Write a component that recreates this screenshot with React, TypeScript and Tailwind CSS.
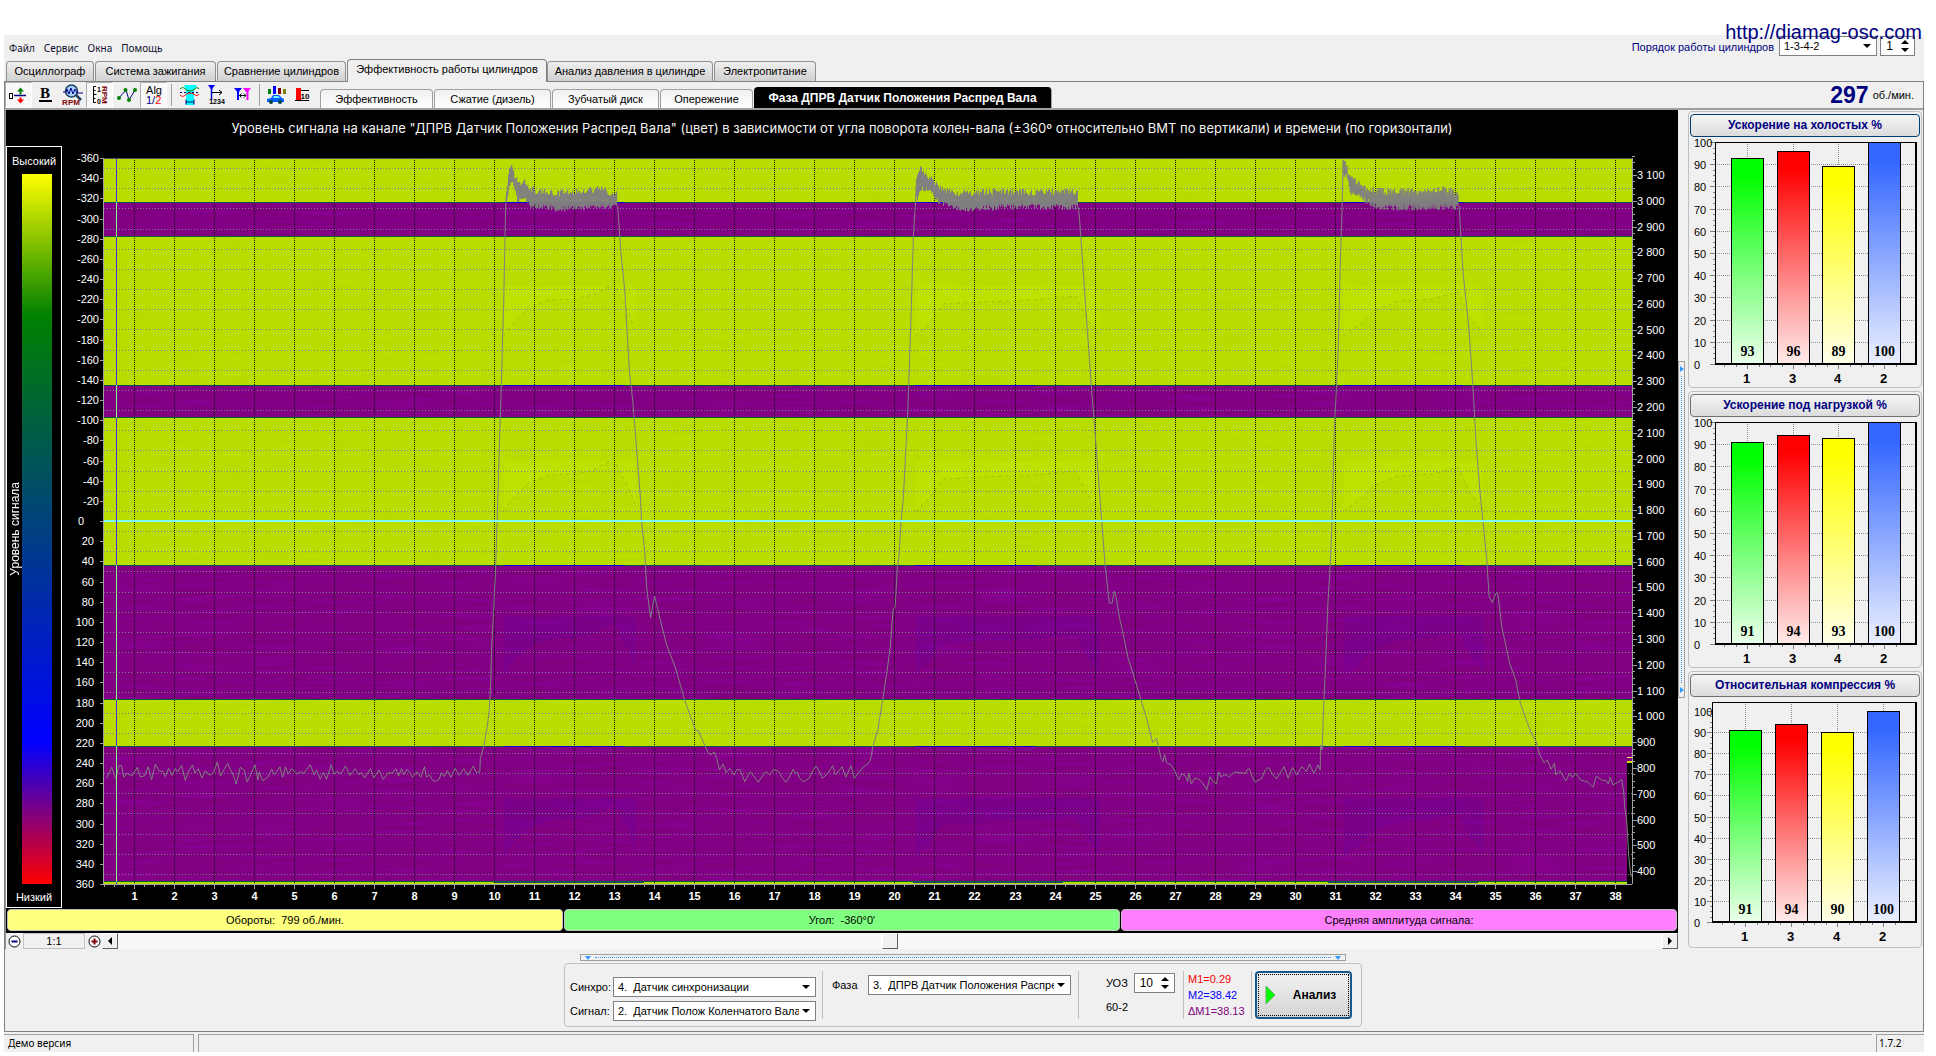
import { useLayoutEffect, useRef, useState } from "react";
import type { ReactNode } from "react";

/* ---------- shared data ---------- */

const MAIN_TABS = [
  { label: "Осциллограф", width: "w-[88px]" },
  { label: "Система зажигания", width: "w-[121px]" },
  { label: "Сравнение цилиндров", width: "w-[129px]" },
  { label: "Эффективность работы цилиндров", width: "w-[200px]" },
  { label: "Анализ давления в цилиндре", width: "w-[166px]" },
  { label: "Электропитание", width: "w-[102px]" },
];

const SUB_TABS = [
  { label: "Эффективность", width: "w-[113px]" },
  { label: "Сжатие (дизель)", width: "w-[117px]" },
  { label: "Зубчатый диск", width: "w-[107px]" },
  { label: "Опережение", width: "w-[93px]" },
];

type Bar = { name: string; value: number };

const CHARTS: { title: string; bars: Bar[]; headroom: number; focused?: boolean }[] = [
  { title: "Ускорение на холостых %", headroom: 0, focused: true, bars: [{ name: "1", value: 93 }, { name: "3", value: 96 }, { name: "4", value: 89 }, { name: "2", value: 100 }] },
  { title: "Ускорение под нагрузкой %", headroom: 0, bars: [{ name: "1", value: 91 }, { name: "3", value: 94 }, { name: "4", value: 93 }, { name: "2", value: 100 }] },
  { title: "Относительная компрессия %", headroom: 9, bars: [{ name: "1", value: 91 }, { name: "3", value: 94 }, { name: "4", value: 90 }, { name: "2", value: 100 }] },
];

const BAR_COLORS = [
  { top: "#00ff00", bottom: "#ebffeb" },
  { top: "#ff0000", bottom: "#ffebeb" },
  { top: "#ffff00", bottom: "#ffffeb" },
  { top: "#3366ff", bottom: "#ebf0ff" },
];

/* ---------- engine speed trace, in nominal plot units ---------- */

const PLOT_W = 1529;
const PLOT_H = 726;

type Pt = [number, number];

const place = (pts: Pt[], ox: number, oy: number, sx: number, sy: number): Pt[] =>
  pts.map(([x, y]) => [ox + x / sx, oy + y / sy]);

const IDLE_START = place(
  [[32,265],[47,232],[60,268],[68,228],[76,226],[84,262],[92,250],[108,258],[124,232],[132,260],[145,258],[157,230],[167,270],[178,222],[190,244],[200,243],[208,260],[218,235],[228,256],[238,235],[245,246],[257,226],[268,272],[278,243],[290,225],[297,250],[307,236],[318,264],[328,242],[340,256],[352,250],[364,216],[374,258],[395,220],[412,256],[421,282],[433,232],[445,240],[454,276],[466,250],[477,224],[486,270],[490,245],[500,272],[516,262],[527,237],[536,254],[552,230],[560,262],[569,230],[577,252],[588,236],[604,252],[613,245],[624,250],[643,224],[655,255],[662,240],[673,268],[683,247],[692,268],[706,224],[715,253],[723,244],[735,252],[749,228],[762,256],[778,236],[790,254],[797,248],[806,264],[824,236],[834,264],[850,240],[862,268],[880,247],[889,250],[900,236],[908,258],[917,236],[925,254],[933,238],[941,246],[950,262],[963,245],[975,262],[986,230],[992,262],[1001,254],[1010,270],[1019,275],[1030,268],[1037,248],[1045,260],[1055,242],[1065,262],[1078,235],[1090,256],[1104,236],[1116,256],[1133,228],[1142,248],[1152,245],[1154,205],[1165,165],[1175,105],[1180,65],[1184,0]],
  -8, 532, 3, 3);

const RISE_1: Pt[] = [[387,525],[388,489],[390,452],[392,409],[394,342],[398,215],[399,175],[400,147],[401,95],[402,45]];

const FALL_1: Pt[] = [[514,48],[517,92],[521,132],[523,167],[526,217],[529,242],[537,342],[538,364],[541,392],[543,429],[547,460],[551,438],[556,459],[563,487],[572,510],[581,542],[592,572],[595,573],[604,594]];

const IDLE_2 = place(
  [[563,765],[570,755],[576,775],[582,810],[590,792],[597,818],[605,805],[615,825],[620,810],[628,808],[639,845],[651,815],[660,830],[669,847],[685,815],[690,820],[695,825],[703,808],[715,815],[722,832],[731,847],[740,828],[747,808],[752,820],[757,817],[762,835],[770,845],[783,835],[790,815],[798,798],[804,810],[813,835],[825,820],[836,797],[842,825],[850,812],[857,800],[865,832],[877,797],[884,835],[893,820],[905,800],[912,795],[920,782],[927,735],[937,690],[948,600],[957,520],[965,440],[971,330],[976,320],[981,200],[984,175],[989,65],[994,0]],
  356, 342, 2.24, 3);

const RISE_2: Pt[] = [[804,260],[806,205],[808,142],[810,75],[812,45]];

const FALL_2: Pt[] = [[975,50],[976,59],[980,115],[983,159],[988,229],[992,279],[996,332],[1002,409],[1006,445],[1009,445],[1011,433],[1013,440]];

const IDLE_3 = place(
  [[0,170],[10,215],[25,290],[50,370],[68,430],[80,470],[100,547],[112,535],[125,595],[131,605],[136,583],[142,608],[155,615],[168,635],[178,660],[188,640],[200,650],[205,665],[209,640],[216,672],[226,655],[240,658],[252,672],[263,690],[272,650],[282,665],[292,672],[298,635],[305,650],[318,644],[330,650],[345,636],[365,638],[380,640],[384,628],[390,626],[398,648],[408,666],[428,655],[438,630],[448,622],[458,640],[472,656],[482,640],[495,620],[507,655],[520,622],[532,645],[548,620],[562,635],[571,612],[584,640],[596,615],[603,630],[604,555],[609,570],[613,450],[617,360],[622,240],[626,130],[634,0]],
  1016, 402, 3, 3);

const RISE_3: Pt[] = [[1229,359],[1231,275],[1235,192],[1237,109],[1239,45]];

const FALL_3: Pt[] = [[1356,48],[1357,65],[1360,115],[1366,172],[1370,232],[1373,285],[1377,335],[1383,395]];

const IDLE_4 = place(
  [[1103,0],[1110,110],[1120,128],[1130,100],[1136,100],[1148,200],[1172,310],[1190,360],[1204,430],[1220,475],[1237,520],[1251,545],[1262,585],[1275,608],[1285,600],[1296,628],[1306,610],[1310,645],[1323,632],[1340,663],[1352,640],[1360,652],[1370,640],[1385,660],[1405,665],[1422,682],[1432,648],[1448,660],[1462,662],[1468,672],[1474,652],[1482,675],[1500,665],[1508,658],[1514,695],[1517,740],[1523,780],[1530,900],[1536,950]],
  1016, 402, 3, 3);

const jitter = (n: number) => {
  const v = Math.sin(n * 127.1) * 43758.5453;
  return v - Math.floor(v);
};

const interpolate = (pts: Pt[], x: number) => {
  for (let i = 1; i < pts.length; i++) {
    if (x <= pts[i][0]) {
      const [x0, y0] = pts[i - 1];
      const [x1, y1] = pts[i];
      return y0 + ((x - x0) / (x1 - x0)) * (y1 - y0);
    }
  }
  return pts[pts.length - 1][1];
};

/* A dense stretch of the trace swinging between an upper and a lower envelope. */
const plateau = (upper: Pt[], lower: Pt[]): Pt[] => {
  const out: Pt[] = [];
  for (let x = upper[0][0]; x <= upper[upper.length - 1][0]; x += 1) {
    out.push([x, interpolate(upper, x) + (jitter(x) - 0.5) * 7]);
    out.push([x, interpolate(lower, x) + (jitter(x + 900) - 0.5) * 6]);
  }
  return out;
};

const TOP_1 = plateau(
  [[403,32],[406,10],[409,9],[412,20],[416,26],[421,23],[426,30],[436,34],[456,35],[486,33],[496,30],[506,35],[513,36]],
  [[403,44],[406,25],[410,27],[414,42],[421,40],[426,48],[436,48],[456,51],[486,49],[513,47]]);
const TOP_2 = plateau(
  [[813,22],[817,10],[824,18],[831,24],[841,33],[856,35],[896,34],[936,35],[966,33],[974,35]],
  [[813,42],[818,30],[826,32],[834,42],[846,48],[861,51],[896,49],[974,49]]);
const TOP_3 = plateau(
  [[1240,4],[1242,4],[1246,17],[1253,24],[1266,32],[1286,34],[1326,34],[1336,31],[1355,35]],
  [[1240,17],[1243,17],[1248,36],[1256,38],[1271,48],[1296,50],[1355,49]]);

const TRACE: Pt[] = [
  ...IDLE_START, ...RISE_1, ...TOP_1, ...FALL_1, ...IDLE_2, ...RISE_2, ...TOP_2,
  ...FALL_2, ...IDLE_3, ...RISE_3, ...TOP_3, ...FALL_3, ...IDLE_4,
];

const LOW_BANDS: Pt[] = [[44, 79], [227, 260], [407, 542], [588, 724]];

const RIDGES: Pt[][] = [
  [[400,0],[412,-16],[425,-28],[445,-36],[470,-37],[490,-41],[510,-52],[524,-25],[532,-5]],
  [[812,0],[825,-12],[840,-32],[880,-34],[930,-36],[972,-40],[985,-15],[996,-2]],
  [[1240,0],[1255,-10],[1270,-25],[1295,-35],[1330,-37],[1355,-44],[1366,-20],[1380,-3]],
];

const linePath = (pts: Pt[], sx: number, sy: number) =>
  pts.map(([x, y], i) => `${i ? "L" : "M"}${(x * sx).toFixed(1)} ${(y * sy).toFixed(1)}`).join("");

function useWidth(initial: number) {
  const ref = useRef<HTMLDivElement>(null);
  const [width, setWidth] = useState(initial);
  useLayoutEffect(() => {
    const node = ref.current;
    if (!node) return;
    const update = () => setWidth(node.clientWidth);
    update();
    const observer = new ResizeObserver(update);
    observer.observe(node);
    return () => observer.disconnect();
  }, []);
  return { ref, width };
}

function HeatMap() {
  const { ref, width } = useWidth(1616);
  const height = 762;
  const left = 42;
  const top = 12;
  const w = Math.max(200, width - left - 46);
  const h = PLOT_H;
  const sx = w / PLOT_W;
  const turnX = (t: number) => Math.round((30 + (t - 1) * 40.05) * sx) + 0.5;
  const angleY = (a: number) => Math.round(((a + 360) / 720) * h) + 0.5;
  const rpmY = (r: number) => Math.round(17 + ((3100 - r) / 100) * 25.78) + 0.5;
  const angles = Array.from({ length: 37 }, (_, i) => -360 + i * 20);
  const turns = Array.from({ length: 38 }, (_, i) => i + 1);
  const rpms = Array.from({ length: 28 }, (_, i) => 400 + i * 100);
  const thousands = (n: number) => (n >= 1000 ? `${Math.floor(n / 1000)} ${String(n % 1000).padStart(3, "0")}` : String(n));

  return (
    <div ref={ref} className="min-w-0 flex-1">
      <svg className="block" width={width} height={height} role="img" aria-label="Уровень сигнала по углу и времени">
        <defs>
          <filter id="grain" x="0" y="0" width="100%" height="100%">
            <feTurbulence type="fractalNoise" baseFrequency="0.02 0.35" numOctaves="3" seed="4" />
            <feColorMatrix type="matrix" values="0 0 0 0 0.56  0 0 0 0 0.76  0 0 0 0 0  2.4 0 0 0 -0.9" />
          </filter>
          <filter id="grainDark" x="0" y="0" width="100%" height="100%">
            <feTurbulence type="fractalNoise" baseFrequency="0.015 0.3" numOctaves="3" seed="9" />
            <feColorMatrix type="matrix" values="0 0 0 0 0.35  0 0 0 0 0  0 0 0 0 0.58  2 0 0 0 -0.8" />
          </filter>
          <clipPath id="lowBands">
            {LOW_BANDS.map(([a, b]) => <rect key={a} x="0" y={a} width={w} height={b - a} />)}
          </clipPath>
        </defs>
        <g transform={`translate(${left} ${top})`}>
          <rect width={w} height={h} fill="#b7dd00" />
          <rect width={w} height={h} filter="url(#grain)" opacity="0.35" />
          {LOW_BANDS.map(([a, b]) => (
            <rect key={a} x="0" y={a} width={w} height={b - a} fill="#800080" shapeRendering="crispEdges" />
          ))}
          <g clipPath="url(#lowBands)">
            <rect width={w} height={h} filter="url(#grainDark)" opacity="0.3" />
          </g>
          {RIDGES.map((ridge, i) => (
            <g key={i} fill="none">
              {[518, 700].map((base) => (
                <g key={base} transform={`translate(0 ${base})`}>
                  <path d={`${linePath(ridge, sx, 1)}V-60H${ridge[0][0] * sx}Z`} fill="#5000b0" opacity="0.14" />
                  <path d={linePath(ridge, sx, 1)} stroke="#a8005c" strokeDasharray="3 4" opacity="0.6" />
                </g>
              ))}
              {[178, 353].map((base) => (
                <g key={base} transform={`translate(0 ${base})`}>
                  <path d={`${linePath(ridge, sx, 1)}V-50H${ridge[0][0] * sx}Z`} fill="#d0f000" opacity="0.25" />
                  <path d={linePath(ridge, sx, 1)} stroke="#8cc000" strokeDasharray="3 4" opacity="0.8" />
                </g>
              ))}
            </g>
          ))}
          {LOW_BANDS.map(([a, b]) => (
            <g key={a} shapeRendering="crispEdges">
              <rect x="0" y={a} width={w} height="1" fill="#004c50" />
              <rect x="0" y={b - 1} width={w} height="1" fill="#006030" />
              {[400, 812, 1240].map((x) => (
                <rect key={x} x={x * sx} y={a} width={120 * sx} height="1" fill="#0000d8" />
              ))}
            </g>
          ))}
          <g shapeRendering="crispEdges">
            {[390, 810, 1225].map((x) => (
              <rect key={x} x={x * sx} y="724" width={150 * sx} height="1" fill="#204880" />
            ))}
            <rect x={w - 5} y="604" width="5" height="122" fill="#000" />
            <rect x={w - 5} y="599" width="5" height="1" fill="#ffff40" />
            <rect x={w - 5} y="603" width="5" height="2" fill="#c8e000" />
          </g>
          <g stroke="#80808f" strokeDasharray="1 2" shapeRendering="crispEdges">
            {angles.slice(0, 36).map((a) => (
              <line key={a} x1="0" x2={w} y1={angleY(a + 10)} y2={angleY(a + 10)} />
            ))}
          </g>
          <g stroke="#101010" strokeDasharray="1 1" shapeRendering="crispEdges">
            {turns.map((t) => <line key={t} x1={turnX(t)} x2={turnX(t)} y1="0" y2={h} />)}
          </g>
          <path d={linePath(TRACE, sx, 1)} fill="none" stroke="#808080" strokeWidth="1" />
          <g shapeRendering="crispEdges">
            <rect x="0" y="362" width={w} height="2" fill="#80ffff" />
            <rect x="12" y="0" width="1" height={h} fill="#4828e8" />
            {LOW_BANDS.map(([a, b]) => <rect key={a} x="12" y={a} width="1" height={b - a} fill="#80ff80" />)}
          </g>
          <g stroke="#a0a0a4" shapeRendering="crispEdges">
            <line x1="-0.5" x2="-0.5" y1="0" y2={h} />
            <line x1="0" x2={w} y1={h + 0.5} y2={h + 0.5} />
            <line x1={w + 0.5} x2={w + 0.5} y1="0" y2={h} />
            <line x1="0" x2={w} y1="0.5" y2="0.5" stroke="#505050" />
            {angles.map((a) => <line key={a} x1="-4" x2="0" y1={angleY(a)} y2={angleY(a)} />)}
            {rpms.map((r) => (
              <g key={r}>
                <line x1={w} x2={w + 5} y1={rpmY(r)} y2={rpmY(r)} />
                {[25, 50, 75].map((d) => <line key={d} x1={w} x2={w + 3} y1={rpmY(r + d)} y2={rpmY(r + d)} />)}
              </g>
            ))}
            {turns.map((t) => (
              <g key={t}>
                <line x1={turnX(t)} x2={turnX(t)} y1={h} y2={h + 5} />
                {[0.25, 0.5, 0.75].map((d) => <line key={d} x1={turnX(t - d)} x2={turnX(t - d)} y1={h} y2={h + 3} />)}
              </g>
            ))}
          </g>
          <g fill="#fff" fontSize="11">
            {angles.map((a) => (
              <text key={a} x={a > 0 ? -10 : a === 0 ? -20 : -5} y={angleY(a) + 3} textAnchor="end">{a}</text>
            ))}
            {rpms.map((r) => <text key={r} x={w + 5} y={rpmY(r) + 3}>{thousands(r)}</text>)}
          </g>
          <g fill="#fff" fontSize="11" fontWeight="700" textAnchor="middle">
            {turns.map((t) => <text key={t} x={turnX(t)} y={h + 16}>{t}</text>)}
          </g>
        </g>
      </svg>
    </div>
  );
}

function BarChart({ bars, headroom, id }: { bars: Bar[]; headroom: number; id: string }) {
  const { ref, width } = useWidth(230);
  const left = headroom ? 22 : 25;
  const top = 5;
  const w = width - left - 4;
  const h = headroom ? 220 : 222;
  const unit = (h - headroom) / 100;
  const y = (v: number) => Math.round(h - v * unit) + 0.5;
  const centers = bars.map((_, i) => Math.round((w * (i * 0.2265 + 0.16))) + 0.5);
  const marks = Array.from({ length: 11 }, (_, i) => i * 10);
  return (
    <div ref={ref} className="w-full">
      <svg className="block" width={width} height={249} role="img" aria-label="Диаграмма по цилиндрам">
        <defs>
          {BAR_COLORS.map((c, i) => (
            <linearGradient key={c.top} id={`${id}-${i}`} x1="0" y1="0" x2="0" y2="1">
              <stop offset="0.08" stopColor={c.top} />
              <stop offset="1" stopColor={c.bottom} />
            </linearGradient>
          ))}
        </defs>
        <g transform={`translate(${left} ${top})`}>
          <g stroke="#909090" strokeDasharray="1 1" shapeRendering="crispEdges">
            {marks.slice(1, 10).map((m) => <line key={m} x1="0" x2={w} y1={y(m)} y2={y(m)} />)}
            {centers.map((c) => <line key={c} x1={c} x2={c} y1="0" y2={h} />)}
          </g>
          <g stroke="#808080" shapeRendering="crispEdges">
            {marks.map((m) => (
              <g key={m}>
                <line x1="-5" x2="0" y1={y(m)} y2={y(m)} />
                {m < 100 && [2.5, 5, 7.5].map((d) => <line key={d} x1="-2" x2="0" y1={y(m + d)} y2={y(m + d)} />)}
              </g>
            ))}
            {centers.map((c) => (
              <g key={c}>
                <line x1={c} x2={c} y1={h} y2={h + 5} />
                {[-23, -11, 12].map((d) => <line key={d} x1={c + d} x2={c + d} y1={h} y2={h + 3} />)}
              </g>
            ))}
          </g>
          {bars.map((b, i) => (
            <rect
              key={b.name}
              x={centers[i] - 16}
              y={y(b.value)}
              width="32"
              height={h - y(b.value)}
              fill={`url(#${id}-${i})`}
              stroke="#000"
              shapeRendering="crispEdges"
            />
          ))}
          <g stroke="#000" shapeRendering="crispEdges" fill="none">
            <path d={`M0 0.5H${w}`} />
            <path d={`M0.5 0V${h}`} strokeWidth="1" />
            <path d={`M0 ${h}H${w}V0`} strokeWidth="2" />
          </g>
          <g fontSize="11" fill="#000">
            {marks.map((m) => (
              <text key={m} x={-left + 4} y={y(m) + 4}>{m}</text>
            ))}
          </g>
          <g textAnchor="middle" fontWeight="700">
            {bars.map((b, i) => (
              <g key={b.name}>
                <text x={centers[i]} y={h - 8} fontSize="14" fontFamily="'Liberation Serif', serif">{b.value}</text>
                <text x={centers[i] - 1} y={h + 19} fontSize="13">{b.name}</text>
              </g>
            ))}
          </g>
        </g>
      </svg>
    </div>
  );
}

/* ---------- toolbar ---------- */

function ToolButton({ label, pressed, children }: { label: string; pressed?: boolean; children: ReactNode }) {
  return (
    <button
      type="button"
      aria-label={label}
      className={
        pressed
          ? "flex h-[26px] w-[27px] items-center justify-center border border-t-[#b0b0b0] border-l-[#b0b0b0] border-r-white border-b-white bg-[#f8f8f8]"
          : "flex h-[26px] w-[27px] items-center justify-center"
      }
    >
      <svg width="22" height="22" viewBox="0 0 22 22" fill="none" stroke="#000080">{children}</svg>
    </button>
  );
}

function Toolbar() {
  return (
    <div className="flex h-[26px] items-start">
      <ToolButton label="Ноль" pressed>
        <rect x="1.500" y="9.500" width="3" height="5" stroke="#000" />
        <path d="M6 11.500h12" strokeWidth="1.500" />
        <path d="M12.500 3.500l3.500 4h-2.500v3h-2v-3h-2.500z" fill="#008000" stroke="none" />
        <path d="M12.500 19.500l3.500-4h-2.500v-2h-2v2h-2.500z" fill="#f00" stroke="none" />
      </ToolButton>
      <ToolButton label="Жирный">
        <text x="10" y="14" fontSize="15" fontWeight="700" textAnchor="middle" fill="#000" stroke="none" fontFamily="'Liberation Serif', serif">B</text>
        <path d="M4 17h13" stroke="#000" strokeWidth="2" />
      </ToolButton>
      <ToolButton label="Поиск оборотов">
        <circle cx="9.500" cy="7" r="6" fill="#a8d0ff" stroke="#204060" strokeWidth="1.500" />
        <path d="M1 8h3l1-3 2 5 2-6 2 6 2-5 2 4h6" strokeWidth="1" />
        <path d="M14 11l5 5" stroke="#204060" strokeWidth="2.500" />
        <text x="9" y="21" fontSize="8" fontWeight="700" textAnchor="middle" fill="#800000" stroke="none">RPM</text>
      </ToolButton>
      <ToolButton label="Шкала оборотов" pressed>
        <path d="M7 2.500H4.500V18.500H7M4.500 6.500h2M4.500 10.500h3M4.500 14.500h2" stroke="#000" />
        <text x="8" y="8" fontSize="7" fontWeight="700" fill="#000" stroke="none">1</text>
        <text x="8" y="20" fontSize="7" fontWeight="700" fill="#000" stroke="none">0</text>
        <text transform="translate(13 2) rotate(90)" fontSize="8" fontWeight="700" fill="#800000" stroke="none">RPM</text>
      </ToolButton>
      <ToolButton label="Точки">
        <path d="M2 15l8-9 3 10 6-10" />
        <g fill="#008000" stroke="none"><circle cx="3" cy="14" r="2" /><circle cx="9.500" cy="6" r="2" /><circle cx="13" cy="16" r="2" /><circle cx="19" cy="6" r="2" /></g>
      </ToolButton>
      <ToolButton label="Алгоритм" pressed>
        <text x="11" y="10" fontSize="11" textAnchor="middle" fill="#000" stroke="none">Alg</text>
        <text x="3" y="20" fontSize="11" fill="#000080" stroke="none">1/<tspan fill="#f00">2</tspan></text>
      </ToolButton>
      <span className="mx-1 h-[22px] w-px self-center bg-[#a0a0a0]" />
      <ToolButton label="Диапазон">
        <path d="M5 1h13l-3 6v14H7V7z" fill="#00ffff" stroke="none" />
        <path d="M1 5c4-4 5 2 10 2s6-6 9-2" stroke="#008000" />
        <path d="M1 8.500h19" stroke="#000080" strokeDasharray="2 2" />
        <path d="M1 11c4 4 5-2 10-2s6 5 9 1" stroke="#f00" />
        <path d="M7 18h8M7 15.500v5M15 15.500v5" />
      </ToolButton>
      <ToolButton label="Порядок">
        <path d="M2 1h7l-3.500 5z" fill="#00f" stroke="none" />
        <path d="M5.500 4v12" stroke="#0000d0" strokeWidth="1.500" />
        <path d="M6 8.500H16M13 6l3 2.500-3 2.500" stroke="#000" />
        <text x="11" y="20" fontSize="7" fontWeight="700" textAnchor="middle" fill="#000" stroke="none">1234</text>
      </ToolButton>
      <ToolButton label="Интервал">
        <path d="M1 4h8l-4 5z" fill="#00f" stroke="none" />
        <path d="M10 4h8l-4 5z" fill="#f0f" stroke="none" />
        <path d="M5 6v10" stroke="#00f" strokeWidth="2" />
        <path d="M14.500 6v10" stroke="#f0f" strokeWidth="2" />
        <path d="M6.500 11.500h6M8.500 9.500l-2 2 2 2M11 9.500l2 2-2 2" stroke="#000" />
      </ToolButton>
      <span className="mx-0.5 h-[22px] w-px self-center bg-[#a0a0a0]" />
      <ToolButton label="Автомобиль">
        <g stroke="none">
          <rect x="3" y="5" width="3" height="5" fill="#008000" />
          <rect x="8" y="2" width="3" height="8" fill="#0000ff" />
          <rect x="13" y="4" width="3" height="6" fill="#800000" />
          <rect x="18" y="5" width="3" height="5" fill="#808000" />
          <path d="M2 15l4-1 2-3h6l3 3 2 1v3H2z" fill="#0060ff" />
          <path d="M9 12h4l2 2H8z" fill="#80ffff" />
          <circle cx="6" cy="18" r="2" fill="#004040" />
          <circle cx="15" cy="18" r="2" fill="#004040" />
        </g>
      </ToolButton>
      <ToolButton label="Значения">
        <rect x="4" y="4" width="5" height="12" fill="#f00" stroke="none" />
        <path d="M3 16.500h14M9 6.500h8" stroke="#000" />
        <text x="13" y="15" fontSize="8" fontWeight="700" textAnchor="middle" fill="#000" stroke="none">10</text>
      </ToolButton>
      <nav className="ml-1 flex h-[26px] flex-1 items-end">
        {SUB_TABS.map((t) => (
          <button key={t.label} type="button" className={`${t.width} mr-px h-[19px] rounded-t-sm border border-b-0 border-[#a0a0a0] bg-gradient-to-b from-[#f0f0f0] to-white text-[11px] leading-[19px] whitespace-nowrap text-black`}>
            {t.label}
          </button>
        ))}
        <button type="button" className="h-[21px] w-[298px] rounded-t-sm border-r border-[#a0a0a0] bg-black text-[12px] leading-[20px] font-bold whitespace-nowrap text-white">
          Фаза ДПРВ Датчик Положения Распред Вала
        </button>
      </nav>
      <p className="flex h-[26px] items-center gap-1 pr-[9px] text-[11px] text-black">
        <strong className="text-[23px] leading-none text-[#000080]">297</strong> об./мин.
      </p>
    </div>
  );
}

/* ---------- small controls ---------- */

function DropDown({ label, value, className }: { label: string; value: string; className: string }) {
  return (
    <span className={`relative block ${className}`}>
      <select aria-label={label} className="block h-full w-full appearance-none border border-[#808080] bg-white pr-4 pl-1 text-[11px] text-black">
        <option>{value}</option>
      </select>
      <span className="pointer-events-none absolute top-1/2 right-[6px] -mt-[2px] border-x-4 border-t-4 border-x-transparent border-t-black" />
    </span>
  );
}

function Spinner({ label, value, className }: { label: string; value: string; className: string }) {
  return (
    <span className={`flex items-center border border-[#808080] bg-white pr-[5px] ${className}`}>
      <input aria-label={label} defaultValue={value} inputMode="numeric" className="min-w-0 flex-1 bg-transparent pr-2 text-right text-[12px] leading-none text-black outline-none" />
      <span className="flex flex-col gap-1">
        <span className="border-x-4 border-b-4 border-x-transparent border-b-black" />
        <span className="border-x-4 border-t-4 border-x-transparent border-t-black" />
      </span>
    </span>
  );
}

function ZoomButton({ label, color, plus }: { label: string; color: string; plus?: boolean }) {
  return (
    <button type="button" aria-label={label} className="flex h-4 w-4 items-center justify-center bg-[#f0f0f0]">
      <svg width="13" height="13" viewBox="0 0 13 13" fill="none">
        <circle cx="6.500" cy="6.500" r="5.500" fill="#fff" stroke="#000" />
        <path d={plus ? "M3.500 6.500h6M6.500 3.500v6" : "M3.500 6.500h6"} stroke={color} strokeWidth="2" />
      </svg>
    </button>
  );
}

const arrowButton = "flex h-4 w-4 items-center justify-center border border-t-white border-l-white border-r-[#606060] border-b-[#606060] bg-[#f0f0f0]";

function SignalPanel() {
  return (
    <section className="flex min-w-0 flex-1 flex-col border-l border-[#909090] bg-black">
      <h1 className="h-9 pt-[9px] text-center font-['Inter'] text-[13px] leading-[18px] text-[#f4f4f4]">
        Уровень сигнала на канале "ДПРВ Датчик Положения Распред Вала" (цвет) в зависимости от угла поворота колен-вала (±360º относительно ВМТ по вертикали) и времени (по горизонтали)
      </h1>
      <div className="flex">
        <div className="flex w-14 flex-col items-center border border-white pt-[7px] text-[11px] leading-[14px] text-white">
          <span>Высокий</span>
          <div className="mt-[6px] flex w-full flex-1">
            <span className="flex w-[15px] items-center justify-center">
              <span className="rotate-180 text-[12px] whitespace-nowrap [writing-mode:vertical-rl]">Уровень сигнала</span>
            </span>
            <span className="w-[30px] bg-[linear-gradient(to_bottom,#ffff00_0%,#008000_20%,#0000ff_80%,#ff0000_100%)]" />
          </div>
          <span className="pt-[6px] pb-[3px]">Низкий</span>
        </div>
        <HeatMap />
      </div>
      <div className="mt-px grid h-[23px] grid-cols-3 gap-px pr-px pb-px pl-px text-center text-[11px] leading-5 text-black">
        <div className="rounded-sm border border-[#c0c0c0] bg-[#ffff80]">Обороты:&nbsp; 799 об./мин.</div>
        <div className="rounded-sm border border-[#c0c0c0] bg-[#80ff80]">Угол:&nbsp; -360°0'</div>
        <div className="rounded-sm border border-[#c0c0c0] bg-[#ff80ff]">Средняя амплитуда сигнала:</div>
      </div>
      <div className="mt-px flex h-4 items-center bg-[#f8f8f8]">
        <ZoomButton label="Уменьшить" color="#000080" />
        <span className="mx-px h-4 w-[62px] border border-[#c0c0c0] bg-[#f0f0f0] text-center text-[11px] leading-[15px] text-black">1:1</span>
        <ZoomButton label="Увеличить" color="#800000" plus />
        <button type="button" aria-label="Влево" className={arrowButton}>
          <span className="border-y-4 border-r-4 border-y-transparent border-r-black" />
        </button>
        <div className="flex flex-1 justify-center">
          <span className="h-4 w-4 border border-t-white border-l-white border-r-[#606060] border-b-[#606060] bg-[#f0f0f0]" />
        </div>
        <button type="button" aria-label="Вправо" className={arrowButton}>
          <span className="border-y-4 border-l-4 border-y-transparent border-l-black" />
        </button>
      </div>
    </section>
  );
}

function Comparison() {
  return (
    <aside className="flex w-[245px] shrink-0 pt-px">
      <div className="mt-[250px] flex h-[337px] w-[7px] flex-col items-center justify-between border border-[#a0a0a0] py-1">
        <span className="border-y-[3px] border-l-[4px] border-y-transparent border-l-[#3399ff]" />
        <span className="my-1 flex-1 border-l border-dotted border-[#3399ff]" />
        <span className="border-y-[3px] border-l-[4px] border-y-transparent border-l-[#3399ff]" />
      </div>
      <div className="ml-[3px] flex flex-1 flex-col gap-[3px]">
        {CHARTS.map((c, i) => (
          <div key={c.title} className="mr-px rounded-sm border border-[#c0c0c0] px-px pt-[2px] pb-px">
            <button
              type="button"
              className={
                c.focused
                  ? "block h-[23px] w-full rounded-sm border border-[#003c74] bg-gradient-to-b from-[#f4f4f4] to-[#dcdcdc] text-[12px] leading-[21px] font-bold text-[#000080]"
                  : "block h-[23px] w-full rounded-sm border border-[#707070] bg-gradient-to-b from-[#f4f4f4] to-[#dcdcdc] text-[12px] leading-[21px] font-bold text-[#000080]"
              }
            >
              {c.title}
            </button>
            <BarChart bars={c.bars} headroom={c.headroom} id={`bars${i}`} />
          </div>
        ))}
      </div>
    </aside>
  );
}

function Controls() {
  const divider = "h-[48px] w-px bg-[#c0c0c0]";
  return (
    <div className="flex h-[82px] flex-col items-center pt-[5px] pr-[2px]">
      <div className="flex h-[7px] w-[766px] items-center border border-[#a0a0a0] px-1">
        <span className="border-x-[3px] border-t-4 border-x-transparent border-t-[#3399ff]" />
        <span className="mx-1 flex-1 border-t border-dotted border-[#3399ff]" />
        <span className="border-x-[3px] border-t-4 border-x-transparent border-t-[#3399ff]" />
      </div>
      <div className="mt-[2px] flex h-[64px] w-[798px] items-center rounded border border-[#c0c0c0] pl-[5px] text-[11px] text-black">
        <div className="grid w-[246px] grid-cols-[43px_203px] items-center gap-y-1 pt-2">
          <span>Синхро:</span>
          <DropDown label="Синхро" value={"4.\u00a0 Датчик синхронизации"} className="h-5" />
          <span>Сигнал:</span>
          <DropDown label="Сигнал" value={"2.\u00a0 Датчик Полож Коленчатого Вала"} className="h-5" />
        </div>
        <span className={`ml-[6px] ${divider}`} />
        <div className="mb-[20px] ml-[9px] flex items-center">
          <span className="w-[36px]">Фаза</span>
          <DropDown label="Фаза" value={"3.\u00a0 ДПРВ Датчик Положения Распред Вала"} className="h-5 w-[203px]" />
        </div>
        <span className={`ml-[7px] ${divider}`} />
        <div className="ml-[27px] w-[69px]">
          <div className="flex items-center">
            <span className="w-[28px]">УОЗ</span>
            <Spinner label="УОЗ" value="10" className="h-5 w-[41px]" />
          </div>
          <div className="mt-1 leading-5">60-2</div>
        </div>
        <span className={`ml-[8px] ${divider}`} />
        <div className="ml-[4px] w-[60px] leading-4 whitespace-nowrap">
          <div className="text-[#ff0000]">M1=0.29</div>
          <div className="text-[#0000ff]">M2=38.42</div>
          <div className="text-[#800080]">ΔM1=38.13</div>
        </div>
        <span className={`ml-[3px] ${divider}`} />
        <button type="button" className="ml-[3px] flex h-[48px] w-[97px] items-center rounded-sm border-2 border-[#17598a] bg-gradient-to-b from-[#f2f2f2] to-[#d4d4d4] p-px text-[12px] font-bold">
          <span className="flex h-full w-full items-center border border-dotted border-black pl-[6px]">
            <svg width="12" height="20" viewBox="0 0 12 20"><path d="M1 1l9 9-9 9z" fill="#00ff00" stroke="#60b060" /></svg>
            <span className="flex-1 pl-1 text-center">Анализ</span>
          </span>
        </button>
      </div>
    </div>
  );
}

export default function App() {
  return (
    <div className="relative min-h-screen bg-white pt-[35px] pr-3 pb-[3px] pl-1 font-['Liberation_Sans',Arial,sans-serif]">
      <a href="http://diamag-osc.com" className="absolute top-[20px] right-[14px] z-10 text-[20px] leading-6 text-[#000080]">http://diamag-osc.com</a>
      <div className="bg-[#f0f0f0]">
        <header className="flex h-[46px] justify-between">
          <div className="flex flex-col justify-between">
            <nav className="flex gap-[9px] pt-[6px] pl-[5px] font-['Noto_Sans'] text-[10px] leading-[14px] text-[#101030]">
              {["Файл", "Сервис", "Окна", "Помощь"].map((m) => <button key={m} type="button">{m}</button>)}
            </nav>
            <nav className="flex items-end pl-[2px]">
              {MAIN_TABS.map((t, i) => (
                <button
                  key={t.label}
                  type="button"
                  className={`${t.width} ${
                    i === 3
                      ? "-mb-px h-[23px] rounded-t border border-b-0 border-[#808080] bg-[#f0f0f0] pb-1 text-[11px] leading-[19px] whitespace-nowrap text-black"
                      : "mr-px h-[20px] rounded-t-sm border border-b-0 border-[#909090] bg-gradient-to-b from-[#f0f0f0] to-[#d0d0d0] text-[11px] leading-[19px] whitespace-nowrap text-black"
                  }`}
                >
                  {t.label}
                </button>
              ))}
            </nav>
          </div>
          <div className="flex items-start pt-px pr-[9px]">
            <span className="pt-[3px] pr-[5px] text-[11px] leading-4 text-[#000080]">Порядок работы цилиндров</span>
            <DropDown label="Порядок работы цилиндров" value="1-3-4-2" className="h-[20px] w-[98px]" />
            <Spinner label="Номер" value="1" className="ml-[3px] h-[20px] w-[35px]" />
          </div>
        </header>
        <main className="border border-[#808080]">
          <Toolbar />
          <div className="flex border-t-2 border-[#a0a0a0]">
            <SignalPanel />
            <Comparison />
          </div>
          <Controls />
        </main>
        <footer className="mt-[2px] grid h-[18px] grid-cols-[190px_1fr_48px] gap-1 font-['Noto_Sans'] text-[10px] leading-4 text-black">
          <div className="border-t border-r border-[#a0a0a0] pl-1">Демо версия</div>
          <div className="border-t border-l border-[#a0a0a0]" />
          <div className="border-t border-l border-[#a0a0a0] pl-[2px]">1.7.2</div>
        </footer>
      </div>
    </div>
  );
}
